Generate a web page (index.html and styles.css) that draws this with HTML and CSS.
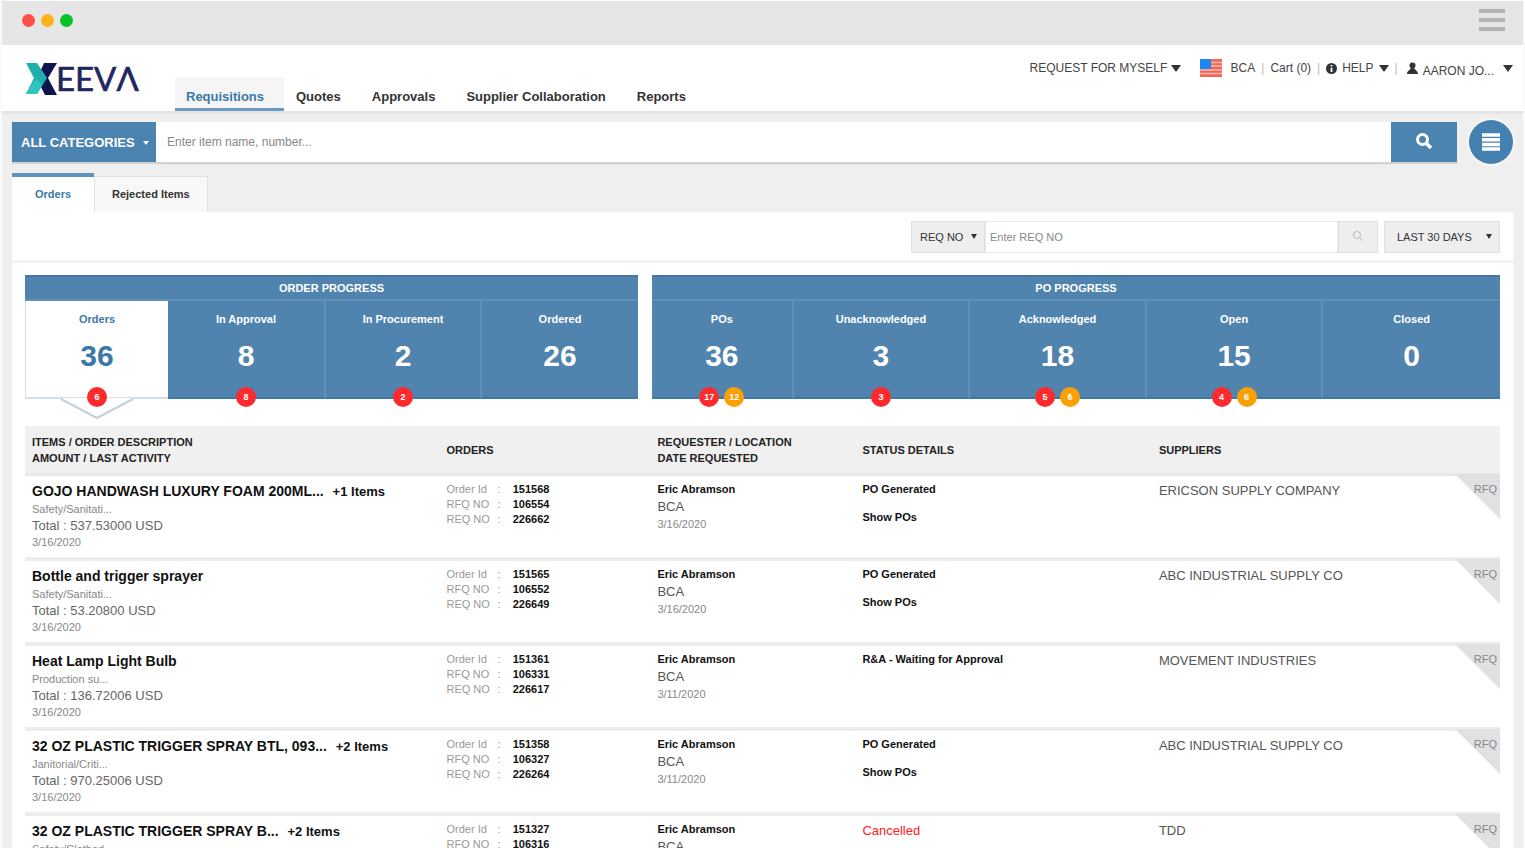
FILE: index.html
```html
<!DOCTYPE html>
<html lang="en">
<head>
  <meta charset="UTF-8" />
  <title>Xeeva - Requisitions</title>
  <link rel="stylesheet" href="styles.css">
</head>
<body>

  <!-- Window bar -->
  <div class="window-bar">
    <div class="dots">
      <span class="dot red"></span>
      <span class="dot yellow"></span>
      <span class="dot green"></span>
    </div>
    <button class="window-menu" aria-label="Menu"><i></i><i></i><i></i></button>
  </div>

  <!-- Header -->
  <header class="header">
    <a class="logo" href="#" aria-label="Xeeva">
      <svg width="116" height="42" viewBox="0 0 116 42">
        <path d="M20 3H33L24 18L33 35H21L13 19Z" fill="#0d1450" />
        <path d="M2 3H13L23 18L13 34H2L10 18Z" fill="#1fb0ae" />
        <path d="M13 19L18 25L13 34H2L7 25Z" fill="#2fc4bd" />
        <text x="32" y="31">EEVΛ</text>
      </svg>
    </a>
    <nav class="nav">
      <a class="active" href="#">Requisitions</a>
      <a href="#">Quotes</a>
      <a href="#">Approvals</a>
      <a href="#">Supplier Collaboration</a>
      <a href="#">Reports</a>
    </nav>
    <div class="user-bar">
      <span class="picker request-picker">
        <select aria-label="Request for"><option>REQUEST FOR MYSELF</option></select>
      </span>
      <svg class="flag" width="22" height="18" viewBox="0 0 22 18">
        <rect width="22" height="18" fill="#f2675a" />
        <path d="M0 11H22M0 14.5H22M11 3.5H22M11 7H22" stroke="#fbb9a8" stroke-width="1.5" />
        <rect width="11" height="10" fill="#1d86f0" />
      </svg>
      <a href="#">BCA</a>
      <span class="sep">|</span>
      <a href="#">Cart (0)</a>
      <span class="sep">|</span>
      <button class="help">
        <svg width="11" height="11" viewBox="0 0 11 11">
          <circle cx="5.5" cy="5.5" r="5.5" fill="#333" />
          <path d="M5.5 2V3.6M5.5 4.8V9" stroke="#fff" stroke-width="1.8" />
        </svg>
        HELP
        <i class="caret"></i>
      </button>
      <span class="sep">|</span>
      <button class="user">
        <svg width="11" height="13" viewBox="0 0 11 13">
          <circle cx="5.5" cy="3.5" r="3" fill="#333" />
          <path d="M0 12C0 9 3 8 4 6H7C8 8 11 9 11 12Z" fill="#333" />
        </svg>
        <span>AARON JO...</span>
        <i class="caret"></i>
      </button>
    </div>
  </header>

  <main class="main">
    <!-- Search -->
    <form class="search">
      <div class="search-box">
        <span class="picker category-picker">
          <select aria-label="Category"><option>ALL CATEGORIES</option></select>
        </span>
        <input type="text" aria-label="Search items" placeholder="Enter item name, number..." />
        <button type="button" aria-label="Search">
          <svg width="18" height="18" viewBox="0 0 18 18" fill="none" stroke="#fff">
            <circle cx="7.5" cy="7.5" r="5" stroke-width="3" />
            <path d="M11 11L16 16" stroke-width="3.5" />
          </svg>
        </button>
      </div>
      <button type="button" class="round" aria-label="List">
        <svg width="20" height="20" viewBox="0 0 20 20" stroke="#fff" stroke-width="3.5">
          <path d="M1 3H19M1 7.7H19M1 12.4H19M1 17H19" />
        </svg>
      </button>
    </form>

    <div class="tabs">
      <button class="tab active">Orders</button>
      <button class="tab">Rejected Items</button>
    </div>

    <section class="panel">
      <div class="filters">
        <span class="picker req-picker">
          <select aria-label="Filter by"><option>REQ NO</option></select>
        </span>
        <input type="text" aria-label="REQ NO" placeholder="Enter REQ NO" />
        <button class="filter-btn" aria-label="Filter">
          <svg width="12" height="12" viewBox="0 0 12 12" fill="none" stroke="#b8b8b8">
            <circle cx="5" cy="5" r="3.5" />
            <path d="M8 8L11 11" />
          </svg>
        </button>
        <span class="picker days-picker">
          <select aria-label="Period"><option>LAST 30 DAYS</option></select>
        </span>
      </div>

      <!-- Progress boxes -->
      <div class="progress">
        <div class="group order-group">
          <h2>ORDER PROGRESS</h2>
          <div class="cells order-cells">
            <div class="cell current">
              <span>Orders</span><strong>36</strong>
              <svg class="notch" width="76" height="22" viewBox="0 0 76 22">
                <path d="M2 0L38 20L74 0" fill="#fff" />
                <path d="M2 1L38 20L74 1" fill="none" stroke="#c3d0dc" stroke-width="2" />
              </svg>
              <div class="badges"><b class="badge">6</b></div>
            </div>
            <div class="cell">
              <span>In Approval</span><strong>8</strong>
              <div class="badges"><b class="badge">8</b></div>
            </div>
            <div class="cell">
              <span>In Procurement</span><strong>2</strong>
              <div class="badges"><b class="badge">2</b></div>
            </div>
            <div class="cell"><span>Ordered</span><strong>26</strong></div>
          </div>
        </div>
        <div class="group po-group">
          <h2>PO PROGRESS</h2>
          <div class="cells po-cells">
            <div class="cell">
              <span>POs</span><strong>36</strong>
              <div class="badges"><b class="badge">17</b><b class="badge warn">12</b></div>
            </div>
            <div class="cell">
              <span>Unacknowledged</span><strong>3</strong>
              <div class="badges"><b class="badge">3</b></div>
            </div>
            <div class="cell">
              <span>Acknowledged</span><strong>18</strong>
              <div class="badges"><b class="badge">5</b><b class="badge warn">6</b></div>
            </div>
            <div class="cell">
              <span>Open</span><strong>15</strong>
              <div class="badges"><b class="badge">4</b><b class="badge warn">6</b></div>
            </div>
            <div class="cell"><span>Closed</span><strong>0</strong></div>
          </div>
        </div>
      </div>

      <!-- Orders -->
      <table class="orders">
        <thead>
          <tr>
            <th class="col-item">ITEMS / ORDER DESCRIPTION<br>AMOUNT / LAST ACTIVITY</th>
            <th class="col-order">ORDERS</th>
            <th class="col-req">REQUESTER / LOCATION<br>DATE REQUESTED</th>
            <th class="col-status">STATUS DETAILS</th>
            <th>SUPPLIERS</th>
          </tr>
        </thead>
        <tbody>
          <tr>
            <td>
              <div class="title">GOJO HANDWASH LUXURY FOAM 200ML... <a href="#">+1 Items</a></div>
              <div class="muted">Safety/Sanitati...</div>
              <div class="total">Total : 537.53000 USD</div>
              <div class="muted date">3/16/2020</div>
            </td>
            <td>
              <dl>
                <dt>Order Id</dt><dd>151568</dd>
                <dt>RFQ NO</dt><dd>106554</dd>
                <dt>REQ NO</dt><dd>226662</dd>
              </dl>
            </td>
            <td>
              <div class="strong">Eric Abramson</div>
              <div class="place">BCA</div>
              <div class="muted">3/16/2020</div>
            </td>
            <td><div class="strong">PO Generated</div><a class="show" href="#">Show POs</a></td>
            <td class="supplier">ERICSON SUPPLY COMPANY<div class="corner">RFQ</div></td>
          </tr>
          <tr>
            <td>
              <div class="title">Bottle and trigger sprayer</div>
              <div class="muted">Safety/Sanitati...</div>
              <div class="total">Total : 53.20800 USD</div>
              <div class="muted date">3/16/2020</div>
            </td>
            <td>
              <dl>
                <dt>Order Id</dt><dd>151565</dd>
                <dt>RFQ NO</dt><dd>106552</dd>
                <dt>REQ NO</dt><dd>226649</dd>
              </dl>
            </td>
            <td>
              <div class="strong">Eric Abramson</div>
              <div class="place">BCA</div>
              <div class="muted">3/16/2020</div>
            </td>
            <td><div class="strong">PO Generated</div><a class="show" href="#">Show POs</a></td>
            <td class="supplier">ABC INDUSTRIAL SUPPLY CO<div class="corner">RFQ</div></td>
          </tr>
          <tr>
            <td>
              <div class="title">Heat Lamp Light Bulb</div>
              <div class="muted">Production su...</div>
              <div class="total">Total : 136.72006 USD</div>
              <div class="muted date">3/16/2020</div>
            </td>
            <td>
              <dl>
                <dt>Order Id</dt><dd>151361</dd>
                <dt>RFQ NO</dt><dd>106331</dd>
                <dt>REQ NO</dt><dd>226617</dd>
              </dl>
            </td>
            <td>
              <div class="strong">Eric Abramson</div>
              <div class="place">BCA</div>
              <div class="muted">3/11/2020</div>
            </td>
            <td><div class="strong">R&amp;A - Waiting for Approval</div></td>
            <td class="supplier">MOVEMENT INDUSTRIES<div class="corner">RFQ</div></td>
          </tr>
          <tr>
            <td>
              <div class="title">32 OZ PLASTIC TRIGGER SPRAY BTL, 093... <a href="#">+2 Items</a></div>
              <div class="muted">Janitorial/Criti...</div>
              <div class="total">Total : 970.25006 USD</div>
              <div class="muted date">3/16/2020</div>
            </td>
            <td>
              <dl>
                <dt>Order Id</dt><dd>151358</dd>
                <dt>RFQ NO</dt><dd>106327</dd>
                <dt>REQ NO</dt><dd>226264</dd>
              </dl>
            </td>
            <td>
              <div class="strong">Eric Abramson</div>
              <div class="place">BCA</div>
              <div class="muted">3/11/2020</div>
            </td>
            <td><div class="strong">PO Generated</div><a class="show" href="#">Show POs</a></td>
            <td class="supplier">ABC INDUSTRIAL SUPPLY CO<div class="corner">RFQ</div></td>
          </tr>
          <tr>
            <td>
              <div class="title">32 OZ PLASTIC TRIGGER SPRAY B... <a href="#">+2 Items</a></div>
              <div class="muted">Safety/Clothed</div>
              <div class="total">Total : 970.25006 USD</div>
              <div class="muted date">3/16/2020</div>
            </td>
            <td>
              <dl>
                <dt>Order Id</dt><dd>151327</dd>
                <dt>RFQ NO</dt><dd>106316</dd>
                <dt>REQ NO</dt><dd>226258</dd>
              </dl>
            </td>
            <td>
              <div class="strong">Eric Abramson</div>
              <div class="place">BCA</div>
              <div class="muted">3/11/2020</div>
            </td>
            <td><div class="cancelled">Cancelled</div></td>
            <td class="supplier">TDD<div class="corner">RFQ</div></td>
          </tr>
        </tbody>
      </table>
    </section>
  </main>

</body>
</html>
```

FILE: styles.css
```css
* {
  box-sizing: border-box;
}

body {
  font-family: "Liberation Sans", Arial, sans-serif;
  font-size: 12px;
  color: #333;
  background: #efefef;
  margin: 0;
  height: 100vh;
  overflow: hidden;
  border: 1px solid #fafafa;
  border-width: 1px 2px 0;
}

a {
  color: inherit;
  text-decoration: none;
}

button, select, input {
  font: inherit;
  color: inherit;
  border: none;
  border-radius: 0;
  padding: 0;
  margin: 0;
  background: none;
}

button {
  cursor: pointer;
}

/* window bar */
.window-bar {
  display: flex;
  justify-content: space-between;
  align-items: center;
  height: 44px;
  padding: 0 18px 6px 20px;
  background: #e6e6e6;
}

.dots {
  display: flex;
  gap: 6px;
}

.dot {
  width: 13px;
  height: 13px;
  border-radius: 50%;
}

.red { background: #ff4f49; }
.yellow { background: #ffb31a; }
.green { background: #06c22b; }

.window-menu {
  display: flex;
  flex-direction: column;
  gap: 5px;
  width: 26px;
}

.window-menu i {
  height: 4px;
  background: #b3b3b3;
}

/* header */
.header {
  display: flex;
  height: 69px;
  padding: 0 10px 0 22px;
  background: #fff;
  border-bottom: 3px solid #e4e4e4;
}

.logo {
  margin: 15px 35px 0 0;
}

.logo svg {
  display: block;
}

.logo text {
  font-family: Lato, sans-serif;
  font-size: 33px;
  fill: #1f2660;
  stroke: #1f2660;
  stroke-width: 0.6;
}

.nav {
  display: flex;
  align-items: flex-end;
  gap: 9px;
  font-size: 13px;
  font-weight: bold;
}

.nav a {
  height: 34px;
  padding: 0 11px;
  line-height: 39px;
}

.nav .active {
  width: 109px;
  margin-right: -8px;
  color: #3a78a8;
  background: #f5f5f5;
  border-bottom: 3px solid #6b9bc0;
}

.user-bar {
  display: flex;
  align-items: center;
  gap: 6px;
  height: 46px;
  margin-left: auto;
  color: #444;
}

.sep {
  color: #bbb;
}

.flag {
  margin-right: 3px;
}

.caret {
  border: 5px solid transparent;
  border-top: 7px solid #333;
  border-bottom: 0;
}

.help, .user {
  display: flex;
  align-items: center;
  gap: 5px;
}

.user {
  margin-left: 3px;
}

.user span {
  padding: 5px 4px 0 0;
}

/* drop-downs with a small arrow */
.picker {
  position: relative;
  display: flex;
}

.picker select {
  appearance: none;
  width: 100%;
}

.picker::after {
  content: "";
  position: absolute;
  right: 7px;
  top: 50%;
  margin-top: -3px;
  border: 3px solid transparent;
  border-top: 5px solid #333;
  border-bottom: 0;
  pointer-events: none;
}

.request-picker {
  width: 156px;
  margin-right: 8px;
}

.request-picker::after {
  right: 5px;
  border-width: 7px 5px 0;
}

/* search */
.main {
  padding: 7px 10px 0;
}

.search {
  display: flex;
  align-items: center;
  gap: 12px;
  height: 42px;
}

.search-box {
  display: flex;
  flex: 1;
  height: 40px;
  background: #fff;
  box-shadow: 0 2px 1px #d2d2d2;
}

.category-picker {
  width: 144px;
  background: #4c84b1;
  color: #fff;
}

.category-picker select {
  padding: 0 9px;
  font-size: 13px;
  font-weight: bold;
}

.category-picker::after {
  margin-top: -1px;
  border-width: 4px 3px 0;
  border-top-color: #fff;
}

.search-box input {
  flex: 1;
  padding: 0 11px;
}

input::placeholder {
  color: #888;
  opacity: 1;
}

.search-box button {
  width: 66px;
  background: #4c84b1;
}

.round {
  display: flex;
  align-items: center;
  justify-content: center;
  width: 44px;
  height: 44px;
  border-radius: 50%;
  background: #4480b0;
  box-shadow: 0 0 0 2px #f9f6f0;
}

/* tabs */
.tabs {
  display: flex;
  align-items: flex-end;
  height: 49px;
}

.tab {
  height: 36px;
  padding: 0 17px 2px;
  font-size: 11px;
  font-weight: bold;
  background: #f8f8f8;
  border: 1px solid #e2e2e2;
  border-bottom: 0;
}

.tab.active {
  width: 82px;
  height: 39px;
  color: #3a78a8;
  background: #fff;
  border: none;
  border-top: 4px solid #5d93bd;
}

.panel {
  height: 100vh;
  margin-right: -1px;
  background: #fff;
  border-right: 1px solid #f6f6f6;
}

/* filters */
.filters {
  display: flex;
  justify-content: flex-end;
  height: 51px;
  padding: 9px 13px 8px;
  border-bottom: 3px solid #f3f3f3;
  font-size: 11px;
}

.filters .picker, .filter-btn {
  height: 32px;
  background: #eee;
  border: 1px solid #e0e0e0;
}

.filters select {
  padding-left: 8px;
}

.filters input {
  width: 353px;
  height: 32px;
  padding: 0 4px;
  border: 1px solid #eaeaea;
}

.req-picker {
  width: 74px;
}

.filter-btn {
  width: 40px;
  margin-right: 6px;
}

.days-picker {
  width: 116px;
}

.filters .days-picker select {
  padding-left: 12px;
}

/* progress */
.progress {
  display: flex;
  gap: 14px;
  padding: 12px 13px 0;
}

.group {
  background: #5084af;
  border-top: 2px solid #417aa9;
}

.order-group { flex: 613; }
.po-group { flex: 848; }

.group h2 {
  margin: 0;
  color: #fff;
  font-size: 11px;
  line-height: 22px;
  text-align: center;
}

.cells {
  display: grid;
  border-top: 2px solid #6291b8;
}

.order-cells { grid-template-columns: 143fr 158fr 156fr 156fr; }
.po-cells { grid-template-columns: 142fr 177fr 177fr 177fr 177fr; }

.cell {
  position: relative;
  display: flex;
  flex-direction: column;
  align-items: center;
  height: 98px;
  padding-top: 10px;
  color: #fff;
  border-right: 2px solid #6291b8;
  border-bottom: 2px solid #417aa9;
}

.cell:last-child {
  border-right: none;
}

.cell span {
  font-size: 11px;
  font-weight: bold;
  line-height: 16px;
}

.cell strong {
  margin-top: 11px;
  font-size: 30px;
  line-height: 36px;
}

.cell.current {
  color: #3e77a6;
  background: #fff;
  border: 2px solid #d3dfea;
  border-width: 0 0 2px 1px;
}

.badges {
  position: absolute;
  left: 0;
  right: 0;
  bottom: -10px;
  display: flex;
  justify-content: center;
  gap: 5px;
}

.badge {
  width: 20px;
  height: 20px;
  border-radius: 50%;
  background: #fd2b2e;
  color: #fff;
  font-size: 9px;
  line-height: 20px;
  text-align: center;
}

.badge.warn {
  background: #fb9f07;
}

.notch {
  position: absolute;
  left: 50%;
  top: 97px;
  margin-left: -38px;
}

/* orders table */
.orders {
  width: calc(100% - 26px);
  margin: 27px 13px 0;
  table-layout: fixed;
  border-spacing: 0;
}

.orders th {
  padding: 8px 7px 7px;
  text-align: left;
  font-size: 11px;
  line-height: 16px;
  color: #222;
  background: #f0f0f0;
  border-bottom: 3px solid #e8e8e8;
}

.col-item { width: 28.1%; }
.col-order { width: 14.3%; }
.col-req { width: 13.9%; }
.col-status { width: 20.1%; }

.orders td {
  height: 85px;
  padding: 6px 7px 0;
  vertical-align: top;
  font-size: 11px;
  line-height: 15px;
  border-bottom: 4px solid #ededed;
}

.title {
  font-size: 14px;
  font-weight: bold;
  line-height: 19px;
  color: #111;
  white-space: nowrap;
}

.title a {
  margin-left: 5px;
  font-size: 13px;
}

.muted {
  color: #888;
  line-height: 16px;
}

.total {
  font-size: 13px;
  line-height: 17px;
  color: #666;
}

dl {
  display: grid;
  grid-template-columns: 54px 49px;
  margin: 0;
}

dt {
  display: flex;
  justify-content: space-between;
  color: #999;
  white-space: nowrap;
}

dt::after {
  content: ":";
}

dd {
  margin: 0;
  text-align: right;
  font-weight: bold;
  color: #111;
}

.strong, .show {
  font-weight: bold;
  color: #111;
}

.show {
  display: block;
  margin-top: 13px;
}

.place {
  font-size: 13px;
  line-height: 19px;
  color: #555;
}

.orders .supplier {
  position: relative;
  font-size: 13px;
  line-height: 18px;
  color: #555;
}

.orders td .cancelled {
  font-size: 13px;
  line-height: 18px;
  color: #ff2020;
}

.corner {
  position: absolute;
  top: -2px;
  right: 0;
  width: 45px;
  height: 45px;
  padding: 6px 3px;
  font-size: 11px;
  text-align: right;
  color: #888;
  background: #e2e0e2;
  clip-path: polygon(0 0, 100% 0, 100% 100%);
}
```
